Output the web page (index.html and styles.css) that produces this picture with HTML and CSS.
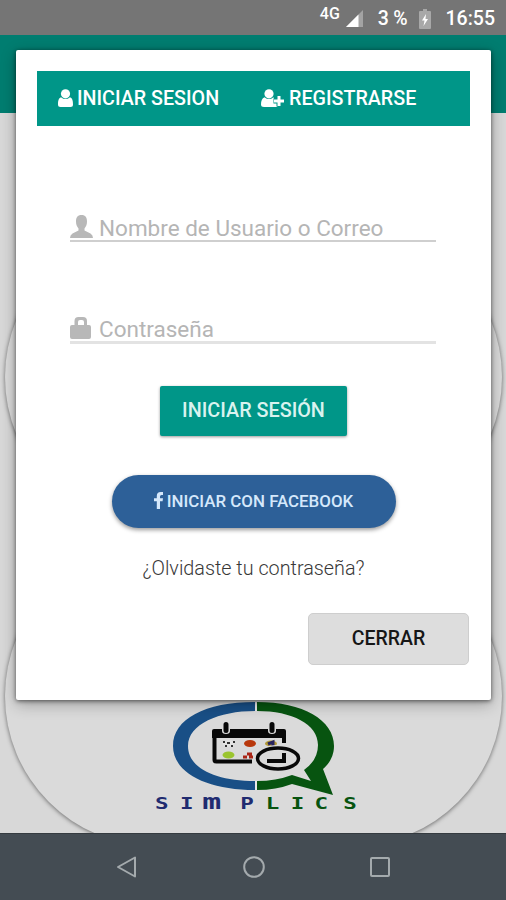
FILE: index.html
```html
<!DOCTYPE html>
<html lang="es">
<head>
<meta charset="utf-8">
<title>Simplics</title>
<link rel="stylesheet" href="styles.css">
</head>
<body>
<div class="phone">
  <header class="status">
    <span class="network">4G</span>
    <svg class="signal" width="18" height="17" viewBox="0 0 18 17"><path d="M0 17 17 0V17z" fill="#a3a3a3"/><path d="M0 17 12.500 4.500V17z" fill="#fff"/></svg>
    <span class="percent">3 %</span>
    <svg class="battery" width="12" height="20" viewBox="0 0 12 20"><path d="M1 2h3V0h4v2h3q1 0 1 1v16q0 1-1 1H1q-1 0-1-1V3q0-1 1-1z" fill="#a8a8a8"/><path d="M7 5 3 11.500h2.500L4.500 17 9 10H6.500z" fill="#fff"/></svg>
    <span class="clock">16:55</span>
  </header>
  <div class="toolbar"></div>
  <main class="content">
    <section class="card"></section>
    <section class="card">
      <svg class="logo" width="210" height="116" viewBox="152 697 210 116">
        <path d="M255 702C205 702 173 719 173 746S207 790 255 790V781C215 781 188 768 188 746S219 711 255 711z" fill="#194f86"/>
        <path d="M257 702C303 702 334 720 334 746C334 756 329 764 323 769L333 795 292 784Q276 790 257 790V781Q276 781 292 775L311 781 304 770Q318 760 318 745C318 724 292 711 257 711z" fill="#075410"/>
        <path d="M256 702v9m0 70v9" stroke="#eee" stroke-width="1.500"/>
        <path d="M214.500 735v25q0 1.500 2 1.500H252M284 731v12" fill="none" stroke="#080808" stroke-width="4"/>
        <path d="M212 738v-7q0-2 2-2h8v2q0 3 4 3t4-3v-2h38v2q0 3 4 3t4-3v-2h8q2 0 2 2v7z" fill="#080808"/>
        <path d="M226 724.500v6m46-6v6" stroke="#080808" stroke-width="5" stroke-linecap="round"/>
        <g fill="#e3e3e3"><ellipse cx="228.500" cy="743.500" rx="6" ry="3.500"/></g>
        <path d="M223 742h2m2 1h3m3-1h2m-10 4h2m4 0h2" stroke="#333" stroke-width="2"/>
        <ellipse cx="250" cy="743.500" rx="6" ry="3.500" fill="#b8370b"/>
        <ellipse cx="271" cy="743.500" rx="6" ry="3" fill="#b49b38"/><path d="M268 744l5-2v4" stroke="#28245e" stroke-width="3" fill="none"/>
        <ellipse cx="228.500" cy="755" rx="6" ry="3.500" fill="#9bc52f"/>
        <path d="M243 757h4m0-3h5m-3 3h4" stroke="#a92516" stroke-width="3"/>
        <ellipse cx="278" cy="758.500" rx="24" ry="13.500" fill="#dadada"/>
        <ellipse cx="278" cy="758.500" rx="20.500" ry="10.500" fill="#dadada" stroke="#080808" stroke-width="3.500"/>
        <path d="M267 761h17v-8" fill="none" stroke="#080808" stroke-width="4"/>
        <g class="wordmark" transform="scale(1.500 1)">
          <text class="navy" x="103.400 120 134.800 160.200" y="809">SI<tspan class="wide">m</tspan>P</text>
          <text class="green" x="177.200 193.800 209.600 228.800" y="809">LICS</text>
        </g>
      </svg>
    </section>
  </main>
  <nav class="navbar">
    <svg width="24" height="24" viewBox="0 0 24 24"><path d="M20 2.500v19L3 12z"/></svg>
    <svg width="24" height="24" viewBox="0 0 24 24"><circle cx="12" cy="12" r="9.800"/></svg>
    <svg width="24" height="24" viewBox="0 0 24 24"><rect x="3" y="3" width="18" height="18" rx="1"/></svg>
  </nav>
  <div class="dialog">
    <div class="tabs">
      <a class="tab tab-login"><svg width="15" height="18" viewBox="0 0 15 18"><circle cx="7.500" cy="4.800" r="4.600"/><path d="M3 8.200Q7.500 12 12 8.200C14.500 9 15 12 15 15.500Q15 18 12.500 18H2.500Q0 18 0 15.500C0 12 .5 9 3 8.200z"/></svg><span>INICIAR SESION</span></a>
      <a class="tab"><svg width="23" height="18" viewBox="0 0 23 18"><circle cx="8" cy="4.800" r="4.600"/><path d="M3.500 8.200Q8 12 12.500 8.200L13 10v4h3.500v3.500Q15.500 18 14 18H3Q0 18 0 15.500C0 12 1 9 3.500 8.200z"/><path d="M18 6.500v11M12.500 12H23" class="plus-gap"/><path d="M18 7v10M13 12h10" class="plus"/></svg><span>REGISTRARSE</span></a>
    </div>
    <form class="form">
      <div class="field">
        <svg width="23" height="23" viewBox="0 0 23 23"><path d="M11.500 0C15.500 0 17 2.500 17 6.500C17 10 16 11.500 14.500 13.500V15.500L20.500 18.500Q23 20 23 23H0Q0 20 2.500 18.500L8.500 15.500V13.500C7 11.500 6 10 6 6.500C6 2.500 7.500 0 11.500 0z"/></svg>
        <span class="hint-user">Nombre de Usuario o Correo</span>
      </div>
      <div class="field field-password">
        <svg width="23" height="23" viewBox="0 0 23 23"><path fill-rule="evenodd" d="M4.500 8V4Q4.500 0 8.500 0H13Q17 0 17 4V8H19Q21 8 21 10V20Q21 22 19 22H2Q0 22 0 20V10Q0 8 2 8zM8 8H14V5Q14 3 12 3H10Q8 3 8 5z"/></svg>
        <span class="hint-pass">Contraseña</span>
      </div>
      <div class="button login"><span>INICIAR SESIÓN</span></div>
      <div class="button facebook"><svg width="9" height="17" viewBox="0 0 9 17"><path d="M9 0V3H7.500Q6 3 6 4.500V6.300H9L8.600 9.200H6V17H2.800V9.200H0V6.300H2.800V4Q2.800 0 6.700 0z"/></svg><span>INICIAR CON FACEBOOK</span></div>
      <div class="forgot">¿Olvidaste tu contraseña?</div>
      <div class="button close"><span>CERRAR</span></div>
    </form>
  </div>
</div>
</body>
</html>
```
FILE: styles.css
```css
* { box-sizing: border-box; }
body { margin: 0; font-family: Roboto, "Liberation Sans", sans-serif; }
svg { display: block; flex: none; }
span { white-space: nowrap; }
.phone { position: relative; width: 506px; height: 900px; overflow: hidden; display: flex; flex-direction: column; background: #d8d8d8; }
.status { height: 35px; flex: none; background: #757575; color: #fff; display: flex; justify-content: flex-end; align-items: center; padding: 2px 11px 0 0; font-weight: 500; font-size: 20px; }
.network { font-size: 16px; margin: -10px 6px 0 0; }
.signal { margin-right: 14px; }
.percent { font-size: 19.500px; margin-right: 11px; letter-spacing: -.2px; }
.battery { margin-right: 15px; }
.clock { font-size: 19.500px; }
.toolbar { height: 78px; flex: none; background: #007d70; }
.content { height: 720px; flex: none; padding: 114px 4px 0 5px; }
.card { height: 300px; border-radius: 150px; background: #dadada; box-shadow: 0 1px 4px rgba(0,0,0,.5); margin-bottom: 19px; padding: 151px 0 0 147px; }
.wordmark { font: bold 15px "DejaVu Sans Mono", monospace; }
.wide { font-size: 21px; }
.navy { fill: #202b70; }
.green { fill: #075410; }
.navbar { height: 67px; flex: none; background: #444c53; display: flex; gap: 102.500px; padding: 21px 0 0 115px; position: relative; border-top: 1px solid #353b40; }
.navbar svg { fill: none; stroke: #a4aaad; stroke-width: 2; stroke-linejoin: round; }
.dialog { position: absolute; left: 16px; top: 50px; width: 475px; height: 650px; background: #fff; border-radius: 2px; padding: 21px 21px 0 21px; box-shadow: 0 1px 4px rgba(0,0,0,.55), 0 4px 15px rgba(0,0,0,.3); }
.tabs { height: 55px; background: #009688; color: #fff; display: flex; align-items: center; padding: 0 0 1px 21px; }
.tab { display: flex; align-items: center; gap: 4px; font-size: 19.700px; font-weight: 500; fill: #fff; }
.tab-login { width: 203px; }
.tab svg { margin-top: -1px; }
.tab:last-child { gap: 5px; }
.plus-gap { stroke: #009688; stroke-width: 5; }
.plus { stroke: #fff; stroke-width: 3; }
.form { display: flex; flex-direction: column; align-items: center; color: #b5b5b5; }
.field { width: 366px; height: 30px; margin-top: 86px; border-bottom: 2px solid #cfcfcf; display: flex; align-items: flex-start; gap: 6px; font-size: 22.500px; line-height: 32px; align-self: flex-start; margin-left: 33px; }
.field svg { fill: #b8b8b8; margin-top: 3px; }
.field-password { margin-top: 71px; border-color: #e3e3e3; border-bottom-width: 3px; height: 31px; }
.field-password svg { margin-top: 4px; }
.button { display: flex; align-items: center; justify-content: center; font-weight: 500; }
.login { width: 187px; height: 50px; margin-top: 42px; border-radius: 2px; padding-bottom: 1px; background: #009688; color: #d9f3ef; font-size: 19.800px; box-shadow: 0 1px 3px rgba(0,0,0,.4); }
.facebook { width: 284px; height: 53px; margin-top: 39px; gap: 4px; border-radius: 27px; padding-bottom: 2px; background: #2d6098; color: #d5e8fb; fill: #d5e8fb; font-size: 16.900px; box-shadow: 0 2px 4px rgba(0,0,0,.4); }
.forgot { height: 26px; line-height: 26px; margin-top: 28px; font-size: 19.800px; font-weight: 300; color: #383838; }
.close { width: 161px; height: 52px; margin-top: 31px; margin-right: 1px; padding-bottom: 2px; align-self: flex-end; border: 1px solid #cecece; border-radius: 5px; background: #ddd; color: #161616; font-size: 19.500px; }
```
